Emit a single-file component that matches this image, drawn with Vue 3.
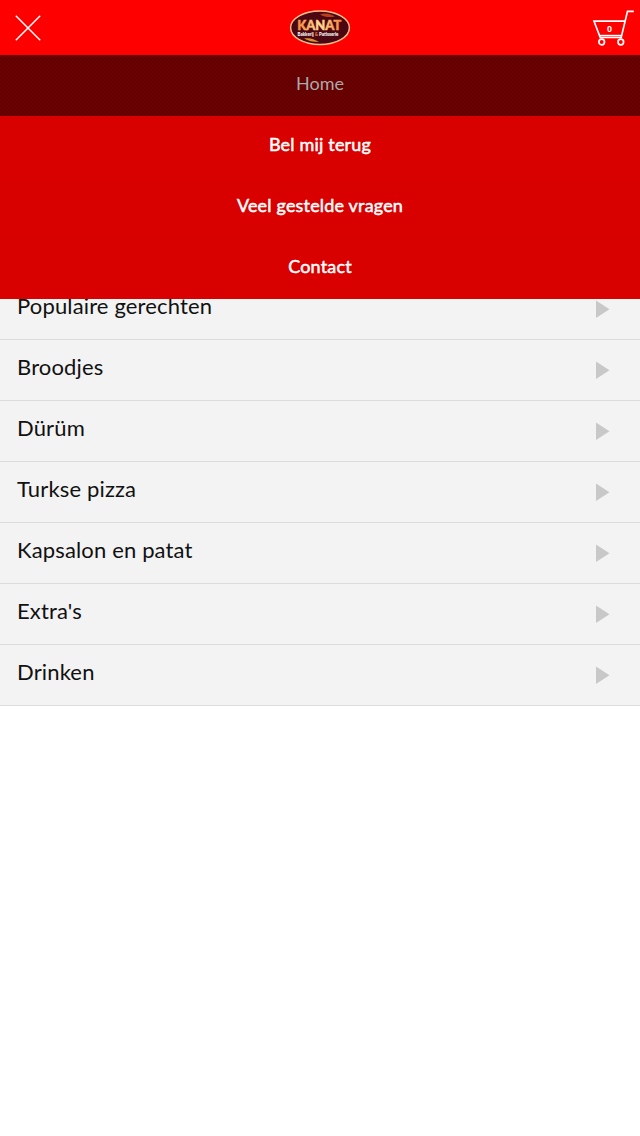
<script setup>
import { ref } from 'vue'

const menuOpen = ref(true)
const cartCount = ref(0)

const menuItems = [
  { id: 1, label: 'Home', active: true },
  { id: 2, label: 'Bel mij terug' },
  { id: 3, label: 'Veel gestelde vragen' },
  { id: 4, label: 'Contact' },
]

const categories = [
  'Populaire gerechten',
  'Broodjes',
  'Dürüm',
  'Turkse pizza',
  'Kapsalon en patat',
  "Extra's",
  'Drinken',
]
</script>

<template>
  <div class="page">
    <header class="header">
      <button class="header-btn" aria-label="Menu" @click="menuOpen = !menuOpen">
        <svg width="28" height="28" viewBox="0 0 28 28">
          <path d="M1.8 1.8 26.2 26.2M26.2 1.8 1.8 26.2" stroke="#fff" stroke-width="1.5" />
        </svg>
      </button>

      <svg class="logo" width="62" height="38" viewBox="0 0 62 38">
        <defs>
          <linearGradient id="gold" x1="0" y1="0" x2="1" y2="0">
            <stop offset="0" stop-color="#f5853c" />
            <stop offset="0.5" stop-color="#ffdf9a" />
            <stop offset="1" stop-color="#f5853c" />
          </linearGradient>
        </defs>
        <ellipse cx="31" cy="18.8" rx="29.4" ry="16.8" fill="#4b0712" stroke="#ffc08c" stroke-width="1.5" />
        <path d="M31 5.5c5-2 10-1 15 2-5 1-10 1-15-2z" fill="#b8401c" />
        <path d="M15 29.5c5-1 10 0 15 3.5-6 0-11-1-15-3.5z" fill="#d99531" />
        <text x="8.2" y="21" class="logo-name" textLength="44" lengthAdjust="spacingAndGlyphs">KANAT</text>
        <text x="8.5" y="27.4" class="logo-sub" textLength="41" lengthAdjust="spacingAndGlyphs">Bakkerij <tspan fill="#ed7a30">&amp;</tspan> Patisserie</text>
      </svg>

      <button class="header-btn" aria-label="Winkelwagen">
        <svg width="42" height="38" viewBox="0 0 42 38">
          <g fill="none" stroke="#fff" stroke-width="1.7">
            <path d="M41.8 2.4h-6.3L29.2 28.4H8.2L2 12.2h31" />
            <path d="M8 26.4h21" stroke-width="1.2" />
            <circle cx="9.7" cy="33" r="2.8" />
            <circle cx="28.8" cy="33" r="2.8" />
          </g>
          <text x="17.4" y="23" class="cart-count">{{ cartCount }}</text>
        </svg>
      </button>

      <nav v-if="menuOpen" class="menu">
        <a
          v-for="item in menuItems"
          :key="item.id"
          class="menu-item"
          :class="{ active: item.active }"
        >{{ item.label }}</a>
      </nav>
    </header>

    <ul class="categories">
      <li v-for="name in categories" :key="name" class="category">
        <span>{{ name }}</span>
        <svg class="arrow" width="14" height="18" viewBox="0 0 14 18">
          <path d="M0 0.5 13.5 9.3 0 18z" fill="#c8c8c8" />
        </svg>
      </li>
    </ul>
  </div>
</template>

<style>
body {
  margin: 0;
  background: #fff;
}
</style>

<style scoped>
.page {
  min-height: 1136px;
  font-family: Lato, 'Liberation Sans', sans-serif;
}

.header {
  position: relative;
  display: flex;
  align-items: center;
  justify-content: space-between;
  box-sizing: border-box;
  height: 55px;
  padding: 0 6px 0 14px;
  background: #fe0000;
}

.header-btn {
  display: flex;
  flex: 1;
  padding: 0;
  border: 0;
  background: none;
  cursor: pointer;
}

.header-btn:last-of-type {
  justify-content: flex-end;
}

.header-btn svg,
.logo {
  display: block;
}

.logo {
  margin-right: 8px;
}

.logo-name {
  font: 900 13.5px Lato, sans-serif;
  fill: url(#gold);
  stroke: url(#gold);
  stroke-width: 0.5px;
}

.logo-sub {
  font: 900 5px Lato, sans-serif;
  fill: #fff;
}

.cart-count {
  font: bold 9px 'Liberation Sans', sans-serif;
  fill: #fff;
  text-anchor: middle;
}

.menu {
  position: absolute;
  top: 55px;
  left: 0;
  width: 100%;
  background: #d90000;
}

.menu-item {
  display: block;
  box-sizing: border-box;
  height: 61px;
  border-bottom: 1px solid #d30000;
  color: #fff;
  font-size: 18px;
  letter-spacing: 0.18px;
  line-height: 57px;
  text-align: center;
  -webkit-text-stroke: 0.5px #fff;
}

.menu-item:last-child {
  border-bottom-color: #d90000;
}

.menu-item.active {
  border-bottom-color: #6a0000;
  background: repeating-conic-gradient(#5e0000 0 25%, #6e0000 0 50%) 0 0 / 4px 4px;
  color: #aaa;
  letter-spacing: 0;
  -webkit-text-stroke: 0;
}

.categories {
  margin: 224px 0 0;
  padding: 0;
  list-style: none;
}

.category {
  display: flex;
  align-items: center;
  justify-content: space-between;
  box-sizing: border-box;
  height: 61px;
  padding: 0 30px 0 17px;
  border-bottom: 1px solid #dcdcdc;
  background: #f3f3f3;
  color: #111;
  font-size: 22px;
  letter-spacing: 0.15px;
}

.category span {
  padding-bottom: 7px;
}
</style>
